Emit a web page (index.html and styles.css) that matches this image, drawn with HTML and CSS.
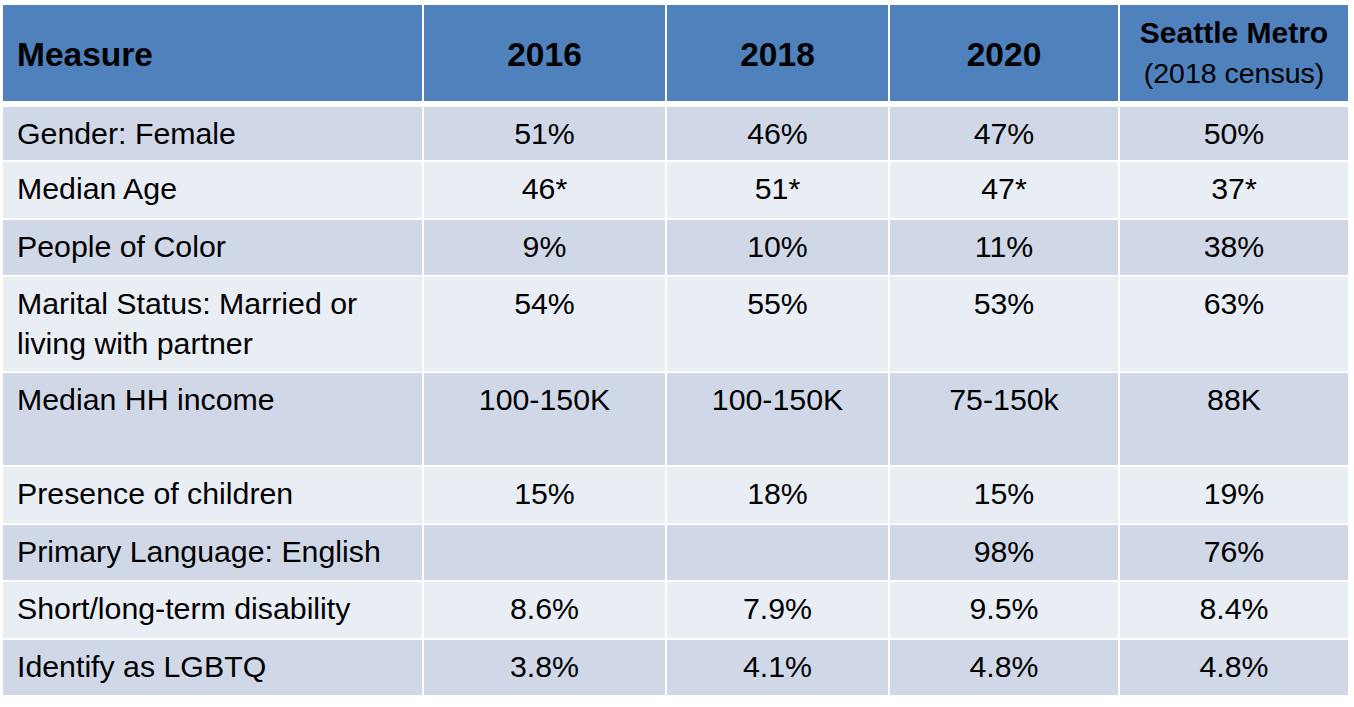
FILE: index.html
```html
<!DOCTYPE html>
<html lang="en">
<head>
<meta charset="utf-8">
<title>Demographics</title>
<link rel="stylesheet" href="styles.css">
</head>
<body>
<div class="table" role="table">
  <div class="th label">Measure</div>
  <div class="th">2016</div>
  <div class="th">2018</div>
  <div class="th">2020</div>
  <div class="th metro"><span class="metro-title">Seattle Metro</span><span class="metro-sub">(2018 census)</span></div>

  <div class="td label odd">Gender: Female</div>
  <div class="td odd">51%</div>
  <div class="td odd">46%</div>
  <div class="td odd">47%</div>
  <div class="td odd">50%</div>

  <div class="td label even">Median Age</div>
  <div class="td even">46*</div>
  <div class="td even">51*</div>
  <div class="td even">47*</div>
  <div class="td even">37*</div>

  <div class="td label odd">People of Color</div>
  <div class="td odd">9%</div>
  <div class="td odd">10%</div>
  <div class="td odd">11%</div>
  <div class="td odd">38%</div>

  <div class="td label even">Marital Status: Married or living with partner</div>
  <div class="td even">54%</div>
  <div class="td even">55%</div>
  <div class="td even">53%</div>
  <div class="td even">63%</div>

  <div class="td label odd">Median HH income</div>
  <div class="td odd">100-150K</div>
  <div class="td odd">100-150K</div>
  <div class="td odd">75-150k</div>
  <div class="td odd">88K</div>

  <div class="td label even">Presence of children</div>
  <div class="td even">15%</div>
  <div class="td even">18%</div>
  <div class="td even">15%</div>
  <div class="td even">19%</div>

  <div class="td label odd">Primary Language: English</div>
  <div class="td odd"></div>
  <div class="td odd"></div>
  <div class="td odd">98%</div>
  <div class="td odd">76%</div>

  <div class="td label even">Short/long-term disability</div>
  <div class="td even">8.6%</div>
  <div class="td even">7.9%</div>
  <div class="td even">9.5%</div>
  <div class="td even">8.4%</div>

  <div class="td label odd">Identify as LGBTQ</div>
  <div class="td odd">3.8%</div>
  <div class="td odd">4.1%</div>
  <div class="td odd">4.8%</div>
  <div class="td odd">4.8%</div>
</div>
</body>
</html>
```

FILE: styles.css
```css
html, body {
  margin: 0;
  background: #ffffff;
}

body {
  padding: 5px 0 0 3px;
  font-family: "Liberation Sans", Arial, sans-serif;
  color: #000000;
}

.table {
  display: grid;
  grid-template-columns: 419px 241px 221px 228px 228px;
  grid-template-rows: 100px 53px 56px 55px 94px 92px 56px 55px 56px 55px;
  column-gap: 2px;
  row-gap: 2px;
  width: 1345px;
}

.th {
  background: #4f81bd;
  margin-bottom: 4px;
  display: flex;
  align-items: center;
  justify-content: center;
  font-weight: bold;
  font-size: 33.5px;
  padding-top: 4px;
  box-sizing: border-box;
}

.th.label {
  justify-content: flex-start;
  padding-left: 14px;
}

.th.metro {
  flex-direction: column;
  line-height: 40px;
  padding-top: 0;
}

.metro-title {
  font-size: 30px;
  font-weight: bold;
}

.metro-sub {
  font-size: 28.5px;
  font-weight: normal;
}

.td {
  font-size: 30.3px;
  line-height: 40px;
  padding-top: 7px;
  text-align: center;
  box-sizing: border-box;
}

.td.label {
  text-align: left;
  padding-left: 14px;
  padding-right: 8px;
}

.odd {
  background: #d0d8e8;
}

.even {
  background: #e9edf4;
}
```
